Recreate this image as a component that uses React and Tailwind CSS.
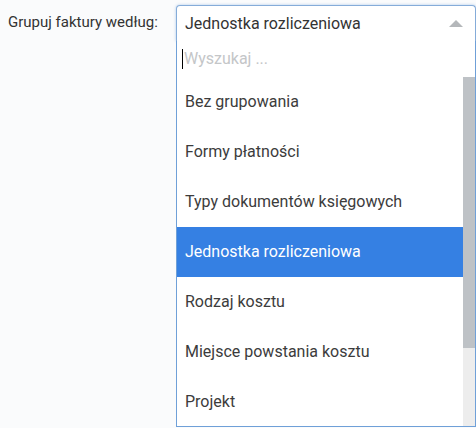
import React from "react";

const options = [
    "Bez grupowania",
    "Formy płatności",
    "Typy dokumentów księgowych",
    "Jednostka rozliczeniowa",
    "Rodzaj kosztu",
    "Miejsce powstania kosztu",
    "Projekt",
];

const App = () => {
    const selected = "Jednostka rozliczeniowa";

    return (
        <div className="w-[476px] h-[428px] overflow-hidden bg-[#fafbfc] font-['Roboto',sans-serif]">
            <div className="flex pt-[5px]">
                <label className="w-[176px] pl-2 h-[35px] flex items-center text-[15px] text-[#333]">
                    Grupuj faktury według:
                </label>
                <div className="w-[300px] flex flex-col">
                    <div className="h-[36px] flex items-center justify-between pl-[8px] pr-[12px] bg-white border border-b-0 border-[#85acd9] rounded-t-[4px] shadow-[0_0_3px_rgba(80,140,210,0.45)]">
                        <span className="text-[16px] text-[#333]">{selected}</span>
                        <span className="w-0 h-0 border-l-[7px] border-r-[7px] border-b-[7px] border-l-transparent border-r-transparent border-b-[#b4b7ba]" />
                    </div>
                    <div className="h-[386px] flex flex-col bg-white border border-t-0 border-[#6fa0d8]">
                        <div className="h-[36px] flex items-center pl-[5px] shrink-0">
                            <span className="w-px h-[20px] bg-black mr-[1px]" />
                            <span className="text-[16px] text-[#c4c6c8]">Wyszukaj ...</span>
                        </div>
                        <div className="flex flex-1 overflow-hidden">
                            <ul className="flex-1 overflow-hidden">
                                {options.map((o) => (
                                    <li
                                        key={o}
                                        className={
                                            o === selected
                                                ? "h-[50px] flex items-center pl-[8px] text-[16px] bg-[#3580e3] text-white"
                                                : "h-[50px] flex items-center pl-[8px] text-[16px] text-[#3c3c3c]"
                                        }
                                    >
                                        {o}
                                    </li>
                                ))}
                            </ul>
                            <div className="w-[12px] flex flex-col bg-[#ededed]">
                                <div className="h-[271px] bg-[#bec2c6]" />
                            </div>
                        </div>
                    </div>
                </div>
            </div>
        </div>
    );
};

export default App;
